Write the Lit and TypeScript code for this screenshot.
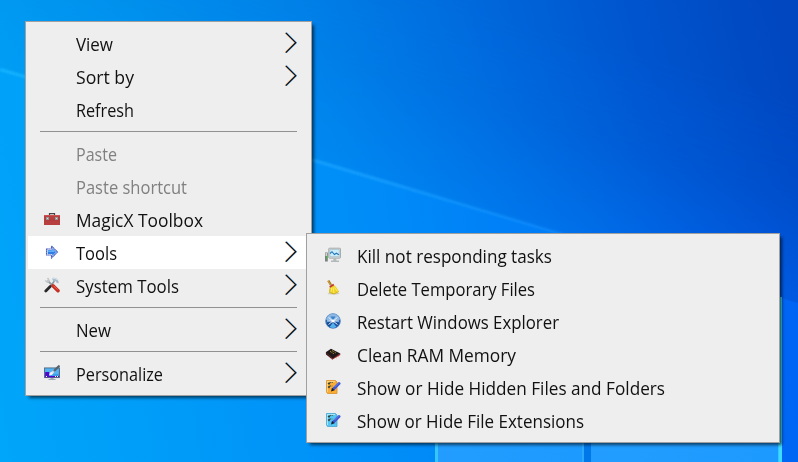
import { LitElement, html, svg, css, nothing } from "lit";
import { customElement, property } from "lit/decorators.js";

interface Item {
  label?: string;
  width?: number;
  icon?: string;
  arrow?: boolean;
  disabled?: boolean;
  active?: boolean;
}

const MAIN: Item[] = [
  { label: "View", width: 37, arrow: true },
  { label: "Sort by", width: 58, arrow: true },
  { label: "Refresh", width: 58 },
  {},
  { label: "Paste", width: 41, disabled: true },
  { label: "Paste shortcut", width: 111, disabled: true },
  { label: "MagicX Toolbox", width: 127, icon: "toolbox" },
  { label: "Tools", width: 41, icon: "arrow", arrow: true, active: true },
  { label: "System Tools", width: 103, icon: "tools", arrow: true },
  {},
  { label: "New", width: 35, arrow: true },
  {},
  { label: "Personalize", width: 87, icon: "personalize", arrow: true },
];

const SUB: Item[] = [
  { label: "Kill not responding tasks", width: 195, icon: "monitor" },
  { label: "Delete Temporary Files", width: 178, icon: "broom" },
  { label: "Restart Windows Explorer", width: 202, icon: "globe" },
  { label: "Clean RAM Memory", width: 159, icon: "chip" },
  { label: "Show or Hide Hidden Files and Folders", width: 308, icon: "noteOrange" },
  { label: "Show or Hide File Extensions", width: 227, icon: "noteBlue" },
];

const note = (light: string, base: string, edge: string) => svg`
  <path d="M1.500 1.500h9l1.500 1.500v11.500H2.500L1.500 13z" fill=${base} stroke=${edge} stroke-width=".8"/>
  <path d="M2 2h8v1H3v10H2z" fill=${light}/>
  <path d="M3 4l1 1 1.500-2M3 7.500l1 1 1.500-2" fill="none" stroke="#34423c" stroke-width="1.200"/>
  <path d="M6.500 3.500h1.500M6.500 7h1" stroke="#6b7650" stroke-width="1"/>
  <path d="M9 9.500L14 4.500" stroke="#4057cf" stroke-width="3" stroke-linecap="round"/>
  <path d="M9.500 8L14 3.500" stroke="#7187ed" stroke-width="1"/>
  <path d="M6 12.500l1-3.700 2.700 2.400z" fill="#171b35"/>`;

const ICONS: Record<string, unknown> = {
  toolbox: svg`
    <path d="M5.500 5V2.600h5V5" fill="none" stroke="#454545" stroke-width="1.200"/>
    <rect x="0" y="4" width="16" height="10" fill="#b83f3f"/>
    <path d="M0 4.500h16" stroke="#cc5350"/><path d="M0 9h16" stroke="#a93535" stroke-width=".7"/>
    <path d="M2 6h3v3H2zM11 6h3v3h-3z" fill="#8f9998"/>
    <path d="M3 7h1v1H3zM12 7h1v1h-1z" fill="#d4dedd"/>`,
  arrow: svg`
    <path d="M2.500 5h5V2l6 6-6 6v-3h-5z" fill="#fff" stroke="#4a60c2" stroke-width="1.100" stroke-dasharray="1.800 .2"/>
    <path d="M3.700 6.100h4.500V4l4 4-4 4V9.900H3.700z" fill="#2f7ee6"/>
    <path d="M3.700 6.500h4.800V5.200l2.500 2.500H3.700z" fill="#72bdfa"/>`,
  tools: svg`
    <path d="M3.500 3.500l7 7" stroke="#949da5" stroke-width="1.800"/>
    <path d="M1.200 3.500l2.300 1.700 1.700-1.600L3.600 1" fill="none" stroke="#c2c7ca" stroke-width="1.500"/>
    <path d="M6.500 9.500l3.800-5.500" stroke="#8c9399" stroke-width="1.600"/>
    <path d="M8 1.200c3-1 5 0 6 2.300l1 2-2 .7-1.300-2-2.500.3z" fill="#a9bccb"/>
    <path d="M8.500 1.500c2-.5 3.500 0 4.500 1.500" fill="none" stroke="#e4eef4" stroke-width=".8"/>
    <path d="M1.800 14l4.400-4.400" stroke="#262829" stroke-width="2.800" stroke-linecap="round"/>
    <path d="M9 8.800l5 4.900" stroke="#c62f22" stroke-width="3.500" stroke-linecap="round"/>
    <path d="M9.500 8.700l4 4" stroke="#ef6552" stroke-width="1"/>`,
  personalize: svg`
    <rect x=".6" y="3" width="14.800" height="9.500" fill="#3d9ee9" stroke="#536d88" stroke-width="1.100"/>
    <path d="M1.200 3.600h13.600v5.400H1.200z" fill="#52b4f3"/>
    <path d="M1.200 7h4v4h6v1.200h-10z" fill="#5205cc"/>
    <path d="M11 11h4v1h-4z" fill="#4011bd"/><path d="M2 11.500h1m8 0h1m1 0h1" stroke="#fff"/>
    <path d="M6.500 13h3v1h2v1h-7v-1h2z" fill="#9eabb5"/>
    <path d="M5 10.300c1-3.500 2-4 4-3.500 1 2-1 3.700-4 3.500z" fill="#f2f0f4"/>
    <path d="M8.500 7.500l2-2" stroke="#d5d9e0" stroke-width="2.200"/>
    <path d="M10.500 5.500L14.800 1.200" stroke="#57626c" stroke-width="2.200" stroke-linecap="round"/>`,
  monitor: svg`
    <path d="M0 5.500h2.800v9H0z" fill="#7b827e"/><path d="M.5 6h1.500v3H.5z" fill="#d0d4d0"/>
    <path d="M1 9h1v2.500H1z" fill="#35be38"/>
    <rect x="3.700" y="1.200" width="11.800" height="10" rx=".8" fill="#d5d9da" stroke="#989ea0" stroke-width=".8"/>
    <path d="M5 2.600h9.200v7H5z" fill="#c9effc" stroke="#8aa3b1" stroke-width=".4"/>
    <path d="M5 6.500l2-1.800 2.400 2.800 2-1.300 2.500 1.500" fill="none" stroke="#2474b9" stroke-width="1.100"/>
    <path d="M8.300 11.500h3v2H14V15H6v-1.500h2.300z" fill="#b3b8b9"/>`,
  broom: svg`
    <ellipse cx="8.500" cy="13.500" rx="6" ry="1.200" fill="#cfcdc3"/>
    <path d="M3.300 .6L6 5" stroke="#a77917" stroke-width="2.300"/>
    <path d="M3 .8l2.500 4" stroke="#dbb052" stroke-width=".8"/>
    <path d="M4.500 7.500l4.500-2.500 2.300 2.300 2.700 4.200-5 2.500-4.500-1.500z" fill="#edd12b"/>
    <path d="M6.500 8l-.5 4m2-4.500l1 5.500M9.500 7.500l3 4" stroke="#fff269" stroke-width=".9"/>
    <path d="M5 8.700l-.4 3.800 4.400 1.400 4.800-2.300" fill="none" stroke="#cda80e" stroke-width=".8"/>
    <path d="M4.700 7.100l4.100-2.500" stroke="#bf332b" stroke-width="1.700"/>`,
  globe: svg`
    <circle cx="8" cy="8" r="7.600" fill="#2560ad"/>
    <path d="M.8 6.500a7.300 7.300 0 0 1 14.400 0c-2 1.500-5 1.500-7.200 1.500s-5.200 0-7.200-1.500z" fill="#8db9e4"/>
    <path d="M1.500 10a7 7 0 0 0 4.500 5l2-6z" fill="#164990"/><path d="M14.500 10a7 7 0 0 1-4.500 5L8 9z" fill="#1a4f9a"/>
    <path d="M4.500 14L8 9.500l3.500 4.500L8 15.300z" fill="#55b2f0"/>
    <path d="M3.500 4.500L12.500 11.500M12.500 4.500L3.500 11.500M2 8h12" fill="none" stroke="#e3f1fc" stroke-width="1"/>
    <path d="M5.500 3.500h5L8 7z" fill="#3c7fca"/>
    <path d="M8 6.500v3M6.500 8h3" stroke="#fff" stroke-width="1.300"/>
    <circle cx="8" cy="8" r="7.300" fill="none" stroke="#6a99cd" stroke-width=".6"/>`,
  chip: svg`
    <path d="M1 7.500l6.500 6L15.300 9V7.500L7 11.500 1 5.500z" fill="#a02b28"/>
    <path d="M.8 6.200L6 2.800l9.300 4.600-7.500 5z" fill="#20191a"/>
    <path d="M.8 6.500l6.700 5.800v1.500L1 8.500z" fill="#3a181c"/>
    <path d="M5 5.300l4 2.500M7 4.500l4 2.500" stroke="#c9a537" stroke-width=".9" stroke-dasharray="1 .7"/>
    <path d="M3 9.800l1 1m2 1l1 1m4-.7l1-.6m1-.5l1-.6" stroke="#e48780" stroke-width=".7"/>`,
  noteOrange: note("#ffd381", "#fbac32", "#d9902b"),
  noteBlue: note("#a8e8ff", "#55c5f1", "#48a5cf"),
};

@customElement("menu-label")
class MenuLabel extends LitElement {
  @property() text = "";
  @property({ type: Number }) width = 0;

  static styles = css`
    :host { display: block; white-space: nowrap; padding-top: 1px; }
    .text { display: inline-block; transform-origin: 0 50%; }
  `;

  render() {
    return html`<span class="text">${this.text}</span>`;
  }

  firstUpdated() {
    const el = this.renderRoot.querySelector<HTMLElement>(".text")!;
    const fit = () => {
      el.style.transform = "none";
      const natural = el.getBoundingClientRect().width;
      if (natural) el.style.transform = `scaleX(${this.width / natural})`;
    };
    fit();
    document.fonts.ready.then(fit);
  }
}

@customElement("context-menu")
class ContextMenu extends LitElement {
  @property({ attribute: false }) items: Item[] = [];

  static styles = css`
    :host {
      display: block;
      box-sizing: border-box;
      padding: 5px 0;
      border: 1px solid #a0a0a0;
      background: #eee;
      box-shadow: 3px 3px 3px -1px rgba(0, 0, 0, 0.6);
      font: 17.5px/33px "Open Sans", "Noto Sans", sans-serif;
      color: #111;
    }
    .row {
      display: grid;
      grid-template-columns: 16px 1fr 12px;
      column-gap: 16px;
      height: 33px;
      margin: 0 2px;
      padding: 0 12px 0 16px;
    }
    .active { background: #fff; }
    .disabled { color: #808080; }
    .icon { width: 16px; height: 16px; margin-top: 8px; }
    .chevron { width: 12px; height: 22px; margin-top: 5px; }
    .line { height: 1px; margin: 5px 14px; background: #919191; }
  `;

  render() {
    return this.items.map((i) =>
      i.label
        ? html`<div class="row ${i.active ? "active" : ""} ${i.disabled ? "disabled" : ""}">
            <svg class="icon" viewBox="0 0 16 16">${i.icon ? ICONS[i.icon] : nothing}</svg>
            <menu-label .text=${i.label} .width=${i.width ?? 0}></menu-label>
            ${i.arrow
              ? html`<svg class="chevron" viewBox="0 0 12 22" fill="none">
                  <path d="M.1 .8L10 10.700.1 20.600" stroke="#f6b878" stroke-width="1.200" />
                  <path d="M1.400 .8L11.400 10.700 1.400 20.600" stroke="#62aee8" stroke-width="1.200" />
                  <path d="M.8 .8L10.700 10.700.8 20.600" stroke="#080b18" stroke-width="1.200" />
                </svg>`
              : nothing}
          </div>`
        : html`<div class="line"></div>`
    );
  }
}

@customElement("app-root")
class AppRoot extends LitElement {
  static styles = css`
    :host {
      display: block;
      position: relative;
      width: 798px;
      height: 462px;
      overflow: hidden;
      background: #0088f4;
    }
    .wallpaper { display: block; width: 798px; height: 462px; }
    .main { position: absolute; left: 25px; top: 21px; width: 287px; }
    .sub { position: absolute; left: 306px; top: 233px; width: 474px; }
  `;

  render() {
    return html`
      <svg class="wallpaper" viewBox="0 0 798 462">
        <defs>
          <linearGradient id="sky" gradientUnits="userSpaceOnUse" x1="0" y1="200" x2="780" y2="20">
            <stop offset="0" stop-color="#0098ee" />
            <stop offset=".22" stop-color="#008eea" />
            <stop offset=".42" stop-color="#007fe6" />
            <stop offset=".62" stop-color="#006adc" />
            <stop offset=".82" stop-color="#0055ce" />
            <stop offset="1" stop-color="#0047c0" />
          </linearGradient>
          <linearGradient id="low" gradientUnits="userSpaceOnUse" x1="0" y1="440" x2="798" y2="300">
            <stop offset="0" stop-color="#00a6f9" />
            <stop offset=".5" stop-color="#008cf8" />
            <stop offset=".75" stop-color="#0079f6" />
            <stop offset="1" stop-color="#0063f4" />
          </linearGradient>
          <linearGradient id="fade" gradientUnits="userSpaceOnUse" x1="430" y1="194" x2="486" y2="3">
            <stop offset="0" stop-color="#fff" stop-opacity=".4" />
            <stop offset=".5" stop-color="#fff" stop-opacity=".85" />
            <stop offset="1" stop-color="#fff" />
          </linearGradient>
          <mask id="upper"><path d="M0 69L798 303V0H0z" fill="url(#fade)" /></mask>
          <linearGradient id="beam" gradientUnits="userSpaceOnUse" x1="0" y1="0" x2="620" y2="0">
            <stop offset="0" stop-color="#16b2ff" />
            <stop offset=".6" stop-color="#18a0ff" stop-opacity=".85" />
            <stop offset="1" stop-color="#148cff" stop-opacity=".3" />
          </linearGradient>
          <linearGradient id="pane" x1="0" y1="0" x2="1" y2="0">
            <stop offset="0" stop-color="#229dff" />
            <stop offset="1" stop-color="#1d9aff" />
          </linearGradient>
          <filter id="soft"><feGaussianBlur stdDeviation="1.100" /></filter>
        </defs>
        <rect width="798" height="462" fill="url(#low)" />
        <rect width="798" height="462" fill="url(#sky)" mask="url(#upper)" />
        <path d="M0 69.500L316 161 560 233.500 650 260" fill="none" stroke="url(#beam)" stroke-width="3" filter="url(#soft)" />
        <rect x="435" y="297" width="347" height="165" fill="#35c5ff" />
        <rect x="438" y="300" width="144" height="162" fill="url(#pane)" />
        <rect x="582" y="300" width="2" height="162" fill="#29aaff" />
        <rect x="584" y="300" width="7" height="162" fill="#0078ea" />
        <rect x="591" y="300" width="187" height="162" fill="url(#pane)" />
        <rect x="779" y="297" width="3" height="165" fill="#3fdcfa" />
      </svg>
      <context-menu class="main" .items=${MAIN}></context-menu>
      <context-menu class="sub" .items=${SUB}></context-menu>
    `;
  }
}
